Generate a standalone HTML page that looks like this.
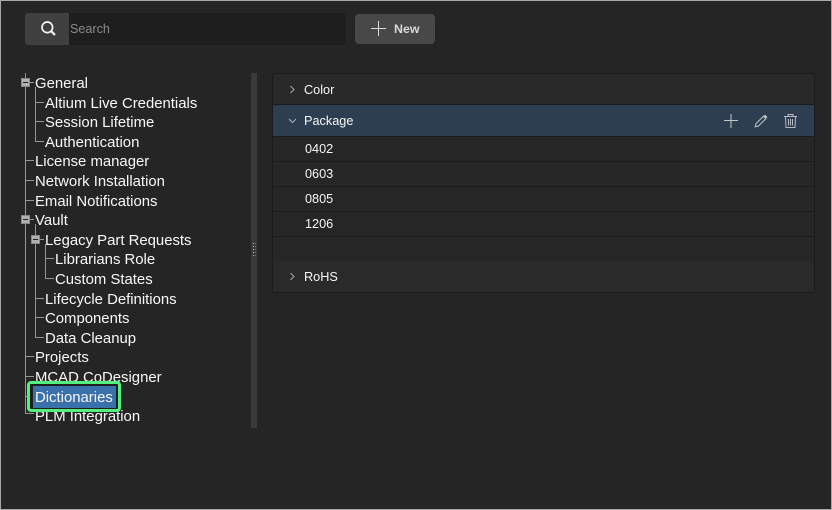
<!DOCTYPE html>
<html>
<head>
<meta charset="utf-8">
<style>
html,body{margin:0;padding:0;background:#252525}
#p{position:relative;width:832px;height:510px;overflow:hidden;background:#252525;font-family:"Liberation Sans",sans-serif;color:#f2f2f2}
#p div{position:absolute}
.b{position:absolute;left:0;top:0;width:832px;height:510px;box-sizing:border-box;border:1px solid #a8a8a8}
.t{font-size:14.9px;line-height:20px;height:20px;white-space:nowrap;color:#f8f8f8}
.l{background:#969696}
.box{width:9px;height:9px;box-sizing:border-box;background:#b0b0b0;border:1px solid #888}
.box i{position:absolute;left:1px;top:3px;width:5px;height:1px;background:#1f1f1f;display:block}
.h{left:273px;width:541px;box-sizing:border-box}
.r{font-size:12.7px;line-height:16px;white-space:nowrap;color:#f6f6f6}
.sep{left:273px;width:541px;height:1px;background:#1b1b1b}
</style>
</head>
<body>
<div id="p">
<div style="left:25px;top:13px;width:321px;height:32px;background:#1e1e1e;border-radius:3px"></div>
<div style="left:25px;top:13px;width:44px;height:32px;background:#404040;border-radius:3px 0 0 3px"></div>
<svg style="position:absolute;left:40px;top:20px" width="17" height="17" viewBox="0 0 17 17" fill="none" stroke="#f4f4f4"><circle cx="7.3" cy="7.3" r="5.3" stroke-width="1.7"/><path d="M11.2 11.2l3.8 3.8" stroke-width="2.2"/></svg>
<div style="left:70px;top:21px;font-size:12.6px;line-height:16px;color:#8a8a8a">Search</div>
<div style="left:355px;top:14px;width:80px;height:30px;background:#484848;border-radius:4px"></div>
<svg style="position:absolute;left:370px;top:20px" width="17" height="17" viewBox="0 0 17 17" stroke="#d8d8d8" stroke-width="1"><path d="M1 8.5h15M8.5 1v15"/></svg>
<div style="left:394px;top:21px;font-size:12.4px;line-height:16px;font-weight:bold;color:#d8d8d8">New</div>

<!-- tree lines -->
<div style="left:-1px;top:-1px;width:200px;height:450px">
<div class="l" style="left:26px;top:74px;width:1px;height:340px"></div>
<div class="l" style="left:36px;top:88px;width:1px;height:55px"></div>
<div class="l" style="left:36px;top:225px;width:1px;height:114px"></div>
<div class="l" style="left:46px;top:245px;width:1px;height:35px"></div>
<div class="l" style="left:31px;top:83px;width:4px;height:1px"></div>
<div class="l" style="left:36px;top:103px;width:9px;height:1px"></div>
<div class="l" style="left:36px;top:122px;width:9px;height:1px"></div>
<div class="l" style="left:36px;top:142px;width:9px;height:1px"></div>
<div class="l" style="left:26px;top:161px;width:9px;height:1px"></div>
<div class="l" style="left:26px;top:181px;width:9px;height:1px"></div>
<div class="l" style="left:26px;top:201px;width:9px;height:1px"></div>
<div class="l" style="left:31px;top:220px;width:4px;height:1px"></div>
<div class="l" style="left:41px;top:240px;width:4px;height:1px"></div>
<div class="l" style="left:46px;top:259px;width:9px;height:1px"></div>
<div class="l" style="left:46px;top:279px;width:9px;height:1px"></div>
<div class="l" style="left:36px;top:299px;width:9px;height:1px"></div>
<div class="l" style="left:36px;top:318px;width:9px;height:1px"></div>
<div class="l" style="left:36px;top:338px;width:9px;height:1px"></div>
<div class="l" style="left:26px;top:357px;width:9px;height:1px"></div>
<div class="l" style="left:26px;top:377px;width:9px;height:1px"></div>
<div class="l" style="left:26px;top:397px;width:9px;height:1px"></div>
<div class="l" style="left:26px;top:414px;width:9px;height:1px"></div>
</div>
<div class="box" style="left:21px;top:78px"><i></i></div>
<div class="box" style="left:21px;top:215px"><i></i></div>
<div class="box" style="left:31px;top:235px"><i></i></div>

<!-- tree labels -->
<div class="t" style="left:35px;top:74px">General</div>
<div class="t" style="left:45px;top:94px">Altium Live Credentials</div>
<div class="t" style="left:45px;top:113px">Session Lifetime</div>
<div class="t" style="left:45px;top:133px">Authentication</div>
<div class="t" style="left:35px;top:152px">License manager</div>
<div class="t" style="left:35px;top:172px">Network Installation</div>
<div class="t" style="left:35px;top:192px">Email Notifications</div>
<div class="t" style="left:35px;top:211px">Vault</div>
<div class="t" style="left:45px;top:231px">Legacy Part Requests</div>
<div class="t" style="left:55px;top:250px">Librarians Role</div>
<div class="t" style="left:55px;top:270px">Custom States</div>
<div class="t" style="left:45px;top:290px">Lifecycle Definitions</div>
<div class="t" style="left:45px;top:309px">Components</div>
<div class="t" style="left:45px;top:329px">Data Cleanup</div>
<div class="t" style="left:35px;top:348px">Projects</div>
<div class="t" style="left:35px;top:368px">MCAD CoDesigner</div>
<div class="t" style="left:35px;top:407px">PLM Integration</div>

<!-- selection -->
<div style="left:27px;top:381px;width:94px;height:31px;box-sizing:border-box;border:3px solid #52f07e;border-radius:4px;background:#1f1f1f"></div>
<div style="left:33px;top:386px;width:83px;height:22px;background:#3b71ab"></div>
<div class="t" style="left:35px;top:388px">Dictionaries</div>

<!-- splitter -->
<div style="left:251px;top:73px;width:6px;height:355px;background:#3a3a3a"></div>
<div style="left:253px;top:243px;width:1px;height:15px;background:repeating-linear-gradient(#bbb 0 1px,transparent 1px 3px)"></div>
<div style="left:255px;top:243px;width:1px;height:15px;background:repeating-linear-gradient(#777 0 1px,transparent 1px 3px)"></div>

<!-- right panel -->
<div style="left:272px;top:73px;width:543px;height:220px;box-sizing:border-box;border:1px solid #1b1b1b;border-radius:3px;background:#262626"></div>
<div class="h" style="top:74px;height:30px;background:#292929;border-radius:3px 3px 0 0"></div>
<div class="sep" style="top:104px"></div>
<div class="h" style="top:105px;height:31px;background:#2c3e50"></div>
<div class="sep" style="top:136px"></div>
<div class="sep" style="top:161px"></div>
<div class="sep" style="top:186px"></div>
<div class="sep" style="top:211px"></div>
<div class="sep" style="top:236px"></div>
<div class="h" style="top:261px;height:31px;background:#2a2a2a"></div>

<svg style="position:absolute;left:287px;top:84px" width="11" height="11" viewBox="0 0 11 11" fill="none" stroke="#aaa" stroke-width="1"><path d="M3.5 2l3.5 3.5L3.5 9"/></svg>
<svg style="position:absolute;left:287px;top:115px" width="11" height="11" viewBox="0 0 11 11" fill="none" stroke="#aab2bb" stroke-width="1"><path d="M2 4l3.5 3.5L9 4"/></svg>
<svg style="position:absolute;left:287px;top:271px" width="11" height="11" viewBox="0 0 11 11" fill="none" stroke="#aaa" stroke-width="1"><path d="M3.5 2l3.5 3.5L3.5 9"/></svg>

<div class="r" style="left:304px;top:82px">Color</div>
<div class="r" style="left:304px;top:113px">Package</div>
<div class="r" style="left:305px;top:141px">0402</div>
<div class="r" style="left:305px;top:166px">0603</div>
<div class="r" style="left:305px;top:191px">0805</div>
<div class="r" style="left:305px;top:216px">1206</div>
<div class="r" style="left:304px;top:269px">RoHS</div>

<!-- action icons -->
<svg style="position:absolute;left:723px;top:113px" width="16" height="16" viewBox="0 0 16 16" stroke="#c4c8cc" stroke-width="1"><path d="M1 7.5h14M8 1v14"/></svg>
<svg style="position:absolute;left:754px;top:114px" width="14" height="14" viewBox="0 0 14 14" fill="none" stroke="#b8bcc2" stroke-width="1.1"><path d="M1.2 12.8l.8-3.2L9.5 2.2l2.4 2.4-7.5 7.4z"/><path d="M10.5 1.3l2.3 2.3" stroke="#d0d0d0" stroke-width="1.6"/></svg>
<svg style="position:absolute;left:783px;top:113px" width="15" height="16" viewBox="0 0 15 16" fill="none" stroke="#b8bcc2" stroke-width="1"><path d="M1 3.5h13M5 3.5V1.5h5v2M2.5 3.5l.5 11h9l.5-11M5.5 6v6.5M7.5 6v6.5M9.5 6v6.5"/></svg>

<div class="b"></div>
</div>
</body>
</html>
